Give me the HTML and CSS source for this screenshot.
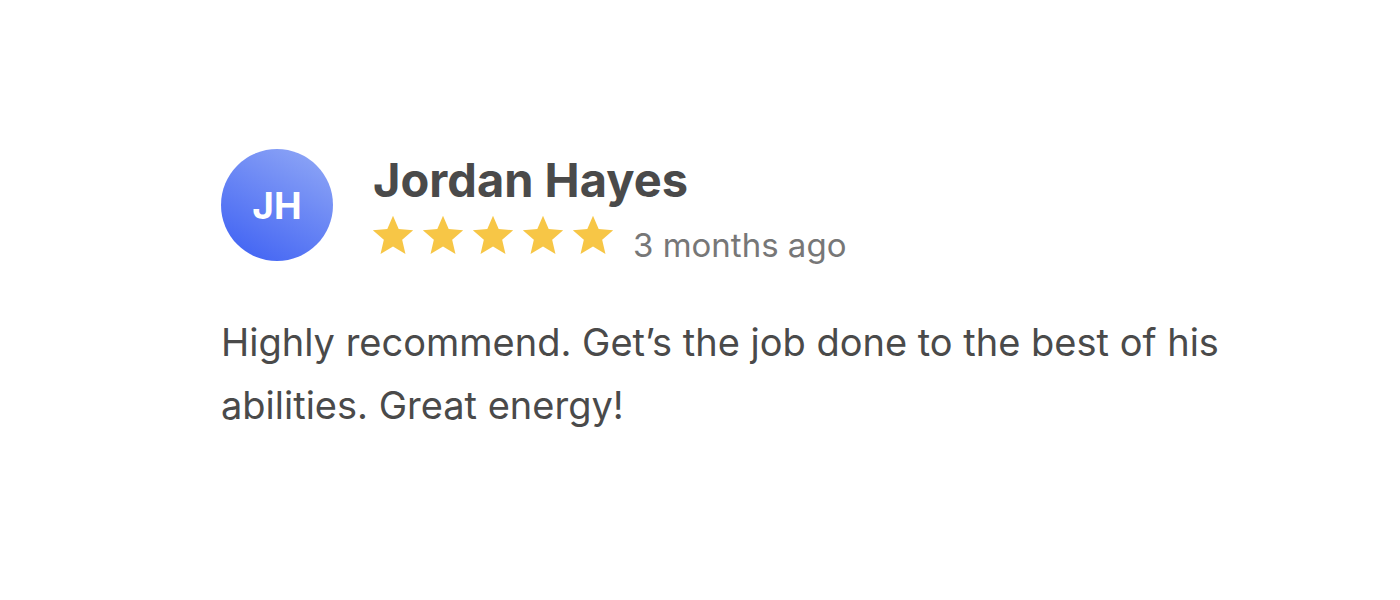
FILE: index.html
```html
<!DOCTYPE html>
<html>
<head>
<meta charset="utf-8">
<link rel="stylesheet" href="styles.css">
</head>
<body>
<div class="review">
  <div class="header">
    <div class="avatar">JH</div>
    <div class="meta">
      <div class="name">Jordan Hayes</div>
      <div class="rating">
        <div class="stars">
          <svg class="star" viewBox="0 0 24 24"><path d="M12 1.5l3.1 7.2 7.9.7-6 5.2 1.8 7.7L12 18.3l-6.8 4 1.8-7.7-6-5.2 7.9-.7z"/></svg>
          <svg class="star" viewBox="0 0 24 24"><path d="M12 1.5l3.1 7.2 7.9.7-6 5.2 1.8 7.7L12 18.3l-6.8 4 1.8-7.7-6-5.2 7.9-.7z"/></svg>
          <svg class="star" viewBox="0 0 24 24"><path d="M12 1.5l3.1 7.2 7.9.7-6 5.2 1.8 7.7L12 18.3l-6.8 4 1.8-7.7-6-5.2 7.9-.7z"/></svg>
          <svg class="star" viewBox="0 0 24 24"><path d="M12 1.5l3.1 7.2 7.9.7-6 5.2 1.8 7.7L12 18.3l-6.8 4 1.8-7.7-6-5.2 7.9-.7z"/></svg>
          <svg class="star" viewBox="0 0 24 24"><path d="M12 1.5l3.1 7.2 7.9.7-6 5.2 1.8 7.7L12 18.3l-6.8 4 1.8-7.7-6-5.2 7.9-.7z"/></svg>
        </div>
        <span class="date">3 months ago</span>
      </div>
    </div>
  </div>
  <p class="text">Highly recommend. Get’s the job done to the best of his abilities. Great energy!</p>
</div>
</body>
</html>
```
FILE: styles.css
```css
html, body {
  margin: 0;
  background: #ffffff;
}
body {
  font-family: "Inter", "Liberation Sans", sans-serif;
  color: #4a4a4a;
}
.review {
  padding: 149px 0 0 221px;
  width: 1020px;
}
.header {
  display: flex;
  align-items: flex-start;
  gap: 40px;
}
.avatar {
  width: 112px;
  height: 112px;
  border-radius: 50%;
  background: linear-gradient(210deg, #93aaf6 0%, #3b5ef3 100%);
  color: #fff;
  font-weight: 700;
  font-size: 37px;
  display: flex;
  align-items: center;
  justify-content: center;
  flex-shrink: 0;
}
.meta {
  display: flex;
  flex-direction: column;
  padding-top: 3px;
}
.name {
  font-size: 47px;
  font-weight: 700;
  line-height: 56px;
  color: #4a4a4a;
}
.rating {
  display: flex;
  align-items: flex-start;
  margin-top: 5px;
}
.stars {
  display: flex;
  gap: 6px;
  margin-left: -2px;
}
.star {
  width: 44px;
  height: 44px;
  fill: #f7c646;
}
.date {
  font-size: 33px;
  line-height: 40px;
  margin-top: 12px;
  margin-left: 18px;
  color: #777777;
}
.text {
  margin: 46px 0 0 0;
  font-size: 38px;
  line-height: 63px;
  color: #4a4a4a;
}
```
